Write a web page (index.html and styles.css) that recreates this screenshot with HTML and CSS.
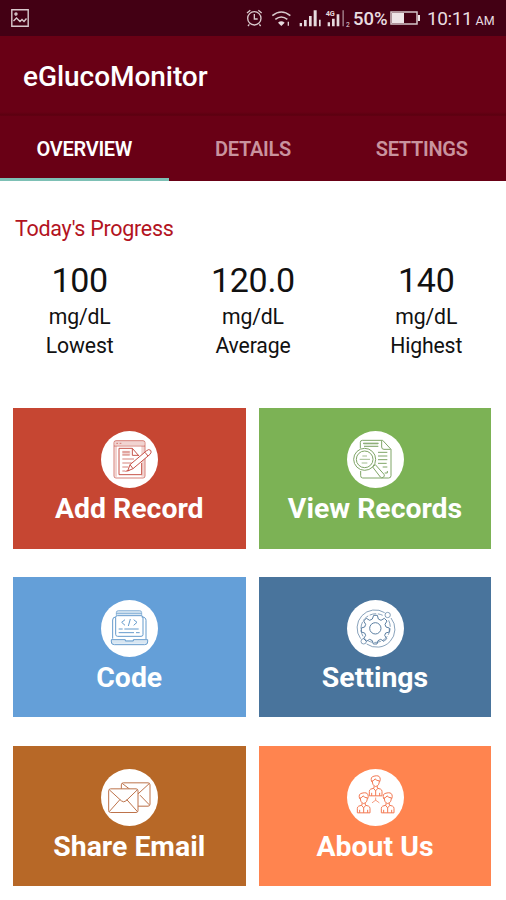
FILE: index.html
```html
<!DOCTYPE html>
<html lang="en">
<head>
<meta charset="utf-8">
<title>eGlucoMonitor</title>
<link rel="stylesheet" href="styles.css">
</head>
<body>
<div class="status">
  <svg class="picture" width="18" height="18" viewBox="0 0 18 18"><path d="M.8.8h16.400v16.400H.8zM2.500 12l3-3 3.500 3.500 2-2 2 2 2.500-3"/><circle cx="5" cy="5" r="1"/></svg>
  <div class="status-right">
    <svg class="signals" viewBox="-18 0 351 108">
      <g fill="none" stroke="#d8c8cc" stroke-width="4"><circle cx="37" cy="55" r="20"/><path d="M37 42v15h10M15 39l10-8M59 39l-10-8M22 73l-4 5M52 73l4 5"/><path d="M91 47q27-22 54 0M100 58q18-14 36 0" stroke-width="5"/><path d="M139 65v12" stroke-width="4"/></g>
      <path fill="#e6dade" d="M108 68q10-8 20 0l-10 10zM173 69h7v10h-7zM186 60h8v19h-8zM201 48h8v31h-8zM215 31h9v48h-9zM231 59h5v20h-5zM257 67h7v12h-7zM270 56h8v23h-8zM284 43h8v36h-8z"/>
      <path fill="#936c78" d="M301 31h5v48h-5z"/>
      <text class="net" x="251" y="47">4G</text><text class="sim" x="312" y="80">2</text>
    </svg>
    <span class="percent">50%</span>
    <svg class="battery" width="31" height="14" viewBox="0 0 31 14"><path d="M1 1h26v12H1z" fill="none" stroke="#d5c5c9" stroke-width="1.500"/><path fill="#eee4e7" d="M2 2h12v10H2zM28 4h2v6h-2z"/></svg>
    <span class="time">10:11</span><span class="ampm">AM</span>
  </div>
</div>
<header class="bar"><h1>eGlucoMonitor</h1></header>
<nav class="tabs"><a class="tab active"><span>OVERVIEW</span></a><a class="tab"><span>DETAILS</span></a><a class="tab"><span>SETTINGS</span></a></nav>
<main>
  <h2>Today's Progress</h2>
  <section class="stats">
    <div><strong>100</strong><span>mg/dL</span><span>Lowest</span></div>
    <div><strong>120.0</strong><span>mg/dL</span><span>Average</span></div>
    <div><strong>140</strong><span>mg/dL</span><span>Highest</span></div>
  </section>
  <section class="cards">
    <a class="card add">
      <svg class="icon" viewBox="33 33 171 171"><circle class="disc" cx="118.500" cy="118.500" r="85.500"/>
        <path class="tint" d="M74 63h89v13H74zM154 78h10v92h-10zM74 78h7v92h-7zM97 92h24v14H97z"/>
        <path d="M72 68q0-6 6-6h81q6 0 6 6v100q0 6-6 6H78q-6 0-6-6zM72 78h93M79 70h5M89 70h5"/>
        <path class="strong" d="M147 108l-20-23H87v79h68v-35M127 85v21h19"/><path d="M97 96h22M97 105h22M97 117h35M97 129h28M97 141h18M97 153h8"/>
        <path class="strong paper" d="M113 153l7-19 50-42q6-6 12-1 4 5-2 12l-51 43zM120 134l9 12M165 97l9 11M106 154l12-3"/></svg>
      <span>Add Record</span></a>
    <a class="card view">
      <svg class="icon" viewBox="33 33 171 171"><circle class="disc" cx="118.500" cy="118.500" r="85.500"/>
        <path class="strong" d="M73 85V67q0-6 6-6h61l25 27v79q0 7-7 7H80q-6 0-6-7v-14M137 62v19q0 7 7 7h20M81 70h47M84 79h43M126 97h28M126 108h28M126 119h28M126 130h26M140 141h14M146 159h8v-6"/>
        <path class="tint" d="M83 67h43v9H83z"/>
        <circle class="paper strong" cx="86" cy="118" r="33"/><circle class="paper strong" cx="86" cy="118" r="25"/>
        <path d="M79 108h14M71 118h31M77 129h17"/><path class="paper strong" d="M110 141l8-7 26 29q3 5-2 9-5 3-9-1z"/></svg>
      <span>View Records</span></a>
    <a class="card code">
      <svg class="icon" viewBox="33 30 171 171"><circle class="disc" cx="118.500" cy="115.500" r="85.500"/>
        <path class="tint" d="M80 63h73v13H80zM65 151h107v10H65z"/>
        <path d="M79 77V68q0-6 6-6h64q6 0 6 6v9M79 70h76"/>
        <path class="strong" d="M68 146V90q0-9 9-9M155 81q13 0 13 10v56M64 149h42v4h24v-4h43v7q0 8-9 8H73q-9 0-9-8z"/>
        <path class="strong" d="M77 82q0-5 5-5h71q6 0 6 6v51q0 5-6 5H83q-6 0-6-6zM105 89l-10 8 10 9M131 89l10 8-10 9M121 87l-6 21M86 117h12M103 117h43M86 128h46M138 128h11"/></svg>
      <span>Code</span></a>
    <a class="card set">
      <svg class="icon" viewBox="33 30 171 171"><circle class="disc" cx="118.500" cy="115.500" r="85.500"/>
        <path d="M74 146a54 54 0 0 1 72-78M165 84a54 54 0 0 1-73 78"/><path stroke-dasharray="20 5" d="M81 139a45 45 0 0 1 59-63M158 91a46 46 0 0 1-61 62"/>
        <circle class="paper" cx="155" cy="75" r="8"/><circle class="paper" cx="83" cy="154" r="8"/><circle class="strong" cx="118" cy="115" r="17"/>
        <path class="strong" d="M113 76h11l3 11 8 4 10-6 8 8-6 10 3 8 10 3v12l-11 3-3 7 6 10-8 8-10-6-8 4-3 10h-11l-3-10-8-4-10 6-8-8 6-10-3-7-10-3v-12l10-3 3-8-6-10 8-8 10 6 8-4z"/></svg>
      <span>Settings</span></a>
    <a class="card share">
      <svg class="icon" viewBox="33 34.500 171 171"><circle class="disc" cx="118.500" cy="120" r="85.500"/>
        <path class="tint" d="M147 141h28v6h-28z"/>
        <rect class="paper strong" x="94" y="76" width="86" height="70" rx="6"/><path class="strong" d="M97 78l44 34 37-34M150 113l28 29"/>
        <rect class="paper strong" x="56" y="94" width="88" height="71" rx="6"/><path class="strong" d="M58 97l36 33q7 6 14 0l34-33M58 162l32-36M142 162l-32-36"/></svg>
      <span>Share Email</span></a>
    <a class="card about">
      <svg class="icon" viewBox="33 34.500 171 171"><circle class="disc" cx="118.500" cy="120" r="85.500"/>
        <defs><g id="person"><path class="strong" d="M-12-13q-5-15 7-17 15-4 18 5 2 5-1 12M-10-16q0 15 10 17 11-2 11-17-8 0-13-6-3 6-8 6M-5 0v6l-10 3q-4 2-4 7v13h38V16q0-5-4-7L5 6V0M-6 7l6 7 6-7M0 14v15M-12 20v9M12 20v9"/></g></defs>
        <use href="#person" x="119" y="86"/><use href="#person" x="83" y="137"/><use href="#person" x="155" y="137"/>
        <path d="M119 120v9M108 136l11-8 11 8"/></svg>
      <span>About Us</span></a>
  </section>
</main>
</body>
</html>
```
FILE: styles.css
```css
* { box-sizing: border-box; }
body { margin: 0; width: 506px; height: 900px; overflow: hidden; background: #fff; color: #111; font-family: Roboto, sans-serif; }
h1, h2 { margin: 0; }
.status { height: 36px; background: #430014; display: flex; justify-content: space-between; padding-left: 11px; color: #e9dde0; }
.picture { margin-top: 9px; fill: none; stroke: #d8c8cc; stroke-width: 1.400; }
.status-right { display: flex; width: 270px; line-height: 38px; white-space: nowrap; }
.net { font-size: 22px; font-weight: 700; fill: #e6dade; }
.sim { font-size: 20px; fill: #e6dade; }
.signals { flex: none; width: 117px; height: 36px; }
.percent { width: 37px; font-size: 18.500px; font-weight: 500; }
.battery { margin: 11px 6px 0 0; flex: none; }
.time { width: 48.500px; font-size: 19px; letter-spacing: -.4px; }
.ampm { font-size: 12.500px; line-height: 41px; }
.bar { height: 80px; background: linear-gradient(#690015 76px, #5b0010 79px, #640013); padding: 2px 0 3px 23px; display: flex; align-items: center; color: #fff; }
h1 { font-size: 28px; line-height: 34px; font-weight: 500; letter-spacing: -.05px; padding-top: 2px; }
.tabs { height: 65px; background: #690015; display: grid; grid-template-columns: repeat(3, 1fr); color: #c9939e; font-size: 20px; font-weight: 600; letter-spacing: -.3px; }
.tab { display: flex; align-items: center; justify-content: center; padding-top: 1px; }
.active { color: #fff; border-bottom: 3px solid #7dc0b5; padding-top: 4px; }
main { padding: 33px 15px 0 13px; }
h2 { padding-left: 2px; font-size: 21.500px; line-height: 30px; font-weight: 400; letter-spacing: -.28px; color: #b3131e; }
.stats { display: grid; grid-template-columns: repeat(3, 173.300px); margin-left: -20px; margin-top: 15px; height: 149px; text-align: center; }
.stats strong, .stats span { display: block; }
.stats strong { font-size: 34px; line-height: 42px; font-weight: 400; letter-spacing: -.3px; }
.stats span { font-size: 21.200px; line-height: 29px; letter-spacing: -.15px; }
.stats span:nth-child(2) { margin-top: 1px; }
.cards { display: grid; grid-template-columns: 232.500px 232px; column-gap: 13.500px; row-gap: 28.200px; }
.card { height: 140.600px; padding-top: 23px; display: flex; flex-direction: column; align-items: center; color: #fff; font-size: 28.400px; line-height: 34px; font-weight: 700; }
.card span { margin-top: 4px; }
.icon { width: 57px; height: 57px; flex: none; fill: none; stroke: currentColor; stroke-width: 2.200; }
.disc, .paper { fill: #fff; }
.disc { stroke: none; }
.strong { stroke-width: 3; }
.tint { fill: currentColor; opacity: .25; stroke: none; }
.add { background: #c64632; } .add .icon { color: #c75349; }
.view { background: #7cb255; } .view .icon { color: #7fa567; }
.code { background: #649fd8; } .code .icon { color: #659bcc; }
.set { background: #49749c; } .set .icon { color: #5c7fa2; }
.share { background: #b76827; } .share .icon { color: #bd734b; }
.about { background: #ff844f; } .about .icon { color: #f37953; }
```
